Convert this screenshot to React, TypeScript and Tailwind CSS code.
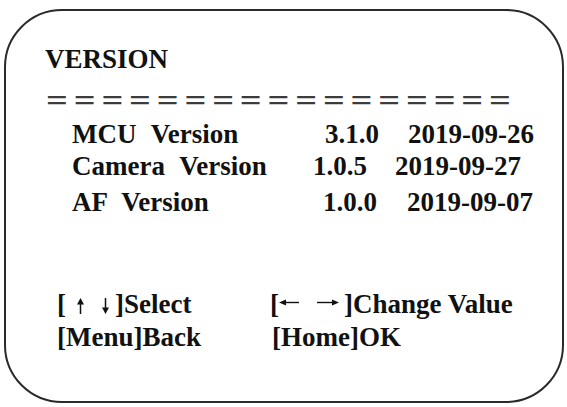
export default function App() {
  return (
    <div className="w-[567px] h-[407px] bg-white overflow-hidden">
      {/* OSD menu panel */}
      <div className="ml-[4px] mt-[9px] w-[560px] h-[394px] border-2 border-[#2a2a2a] rounded-[58px] text-[#111] font-bold font-['Liberation_Serif','Times_New_Roman',serif] text-[27px] leading-[30px] pt-[33px]">
        <div className="ml-[39px]">VERSION</div>
        <div className="ml-[40px] mt-[11px] font-bold text-[32px] leading-[30px] tracking-[4.84px] text-[#3c3c3c] whitespace-nowrap origin-left scale-x-[1.2]">
          =================
        </div>

        {/* version table */}
        <div className="mt-[4px] ml-[66px] flex flex-col [word-spacing:8px] whitespace-nowrap">
          <div className="flex">
            <span className="w-[253px]">MCU Version</span>
            <span>3.1.0</span>
            <span className="ml-[29px]">2019-09-26</span>
          </div>
          <div className="flex mt-[2px]">
            <span className="w-[241px]">Camera Version</span>
            <span>1.0.5</span>
            <span className="ml-[28px]">2019-09-27</span>
          </div>
          <div className="flex mt-[6px]">
            <span className="w-[251px]">AF Version</span>
            <span>1.0.0</span>
            <span className="ml-[30px]">2019-09-07</span>
          </div>
        </div>

        {/* key hints */}
        <div className="mt-[72px] ml-[51px] grid grid-cols-[213px_auto] whitespace-nowrap">
          <div className="flex">
            <span>[</span>
            <svg className="ml-[10px] mt-[9px] w-[9px] h-[16px]" viewBox="0 0 9 16">
              <polygon points="4.5,0 1,6.5 8,6.5" fill="#111" />
              <line x1="4.5" y1="5" x2="4.5" y2="16" stroke="#111" strokeWidth="1.5" />
            </svg>
            <svg className="ml-[16px] mt-[9px] w-[9px] h-[16px]" viewBox="0 0 9 16">
              <line x1="4.5" y1="0" x2="4.5" y2="11" stroke="#111" strokeWidth="1.5" />
              <polygon points="4.5,16 1,9.5 8,9.5" fill="#111" />
            </svg>
            <span className="ml-[5px]">]Select</span>
          </div>
          <div className="flex">
            <span>[</span>
            <svg className="mt-[10px] w-[20px] h-[7px]" viewBox="0 0 20 7">
              <polygon points="0,3.5 7,0.5 7,6.5" fill="#111" />
              <line x1="6" y1="3.5" x2="20" y2="3.5" stroke="#111" strokeWidth="1.4" />
            </svg>
            <svg className="ml-[18px] mt-[10px] w-[22px] h-[7px]" viewBox="0 0 22 7">
              <line x1="0" y1="3.5" x2="16" y2="3.5" stroke="#111" strokeWidth="1.4" />
              <polygon points="22,3.5 15,0.5 15,6.5" fill="#111" />
            </svg>
            <span className="ml-[5px]">]Change Value</span>
          </div>
          <div className="mt-[3px]">[Menu]Back</div>
          <div className="mt-[3px] ml-[2px]">[Home]OK</div>
        </div>
      </div>
    </div>
  );
}
